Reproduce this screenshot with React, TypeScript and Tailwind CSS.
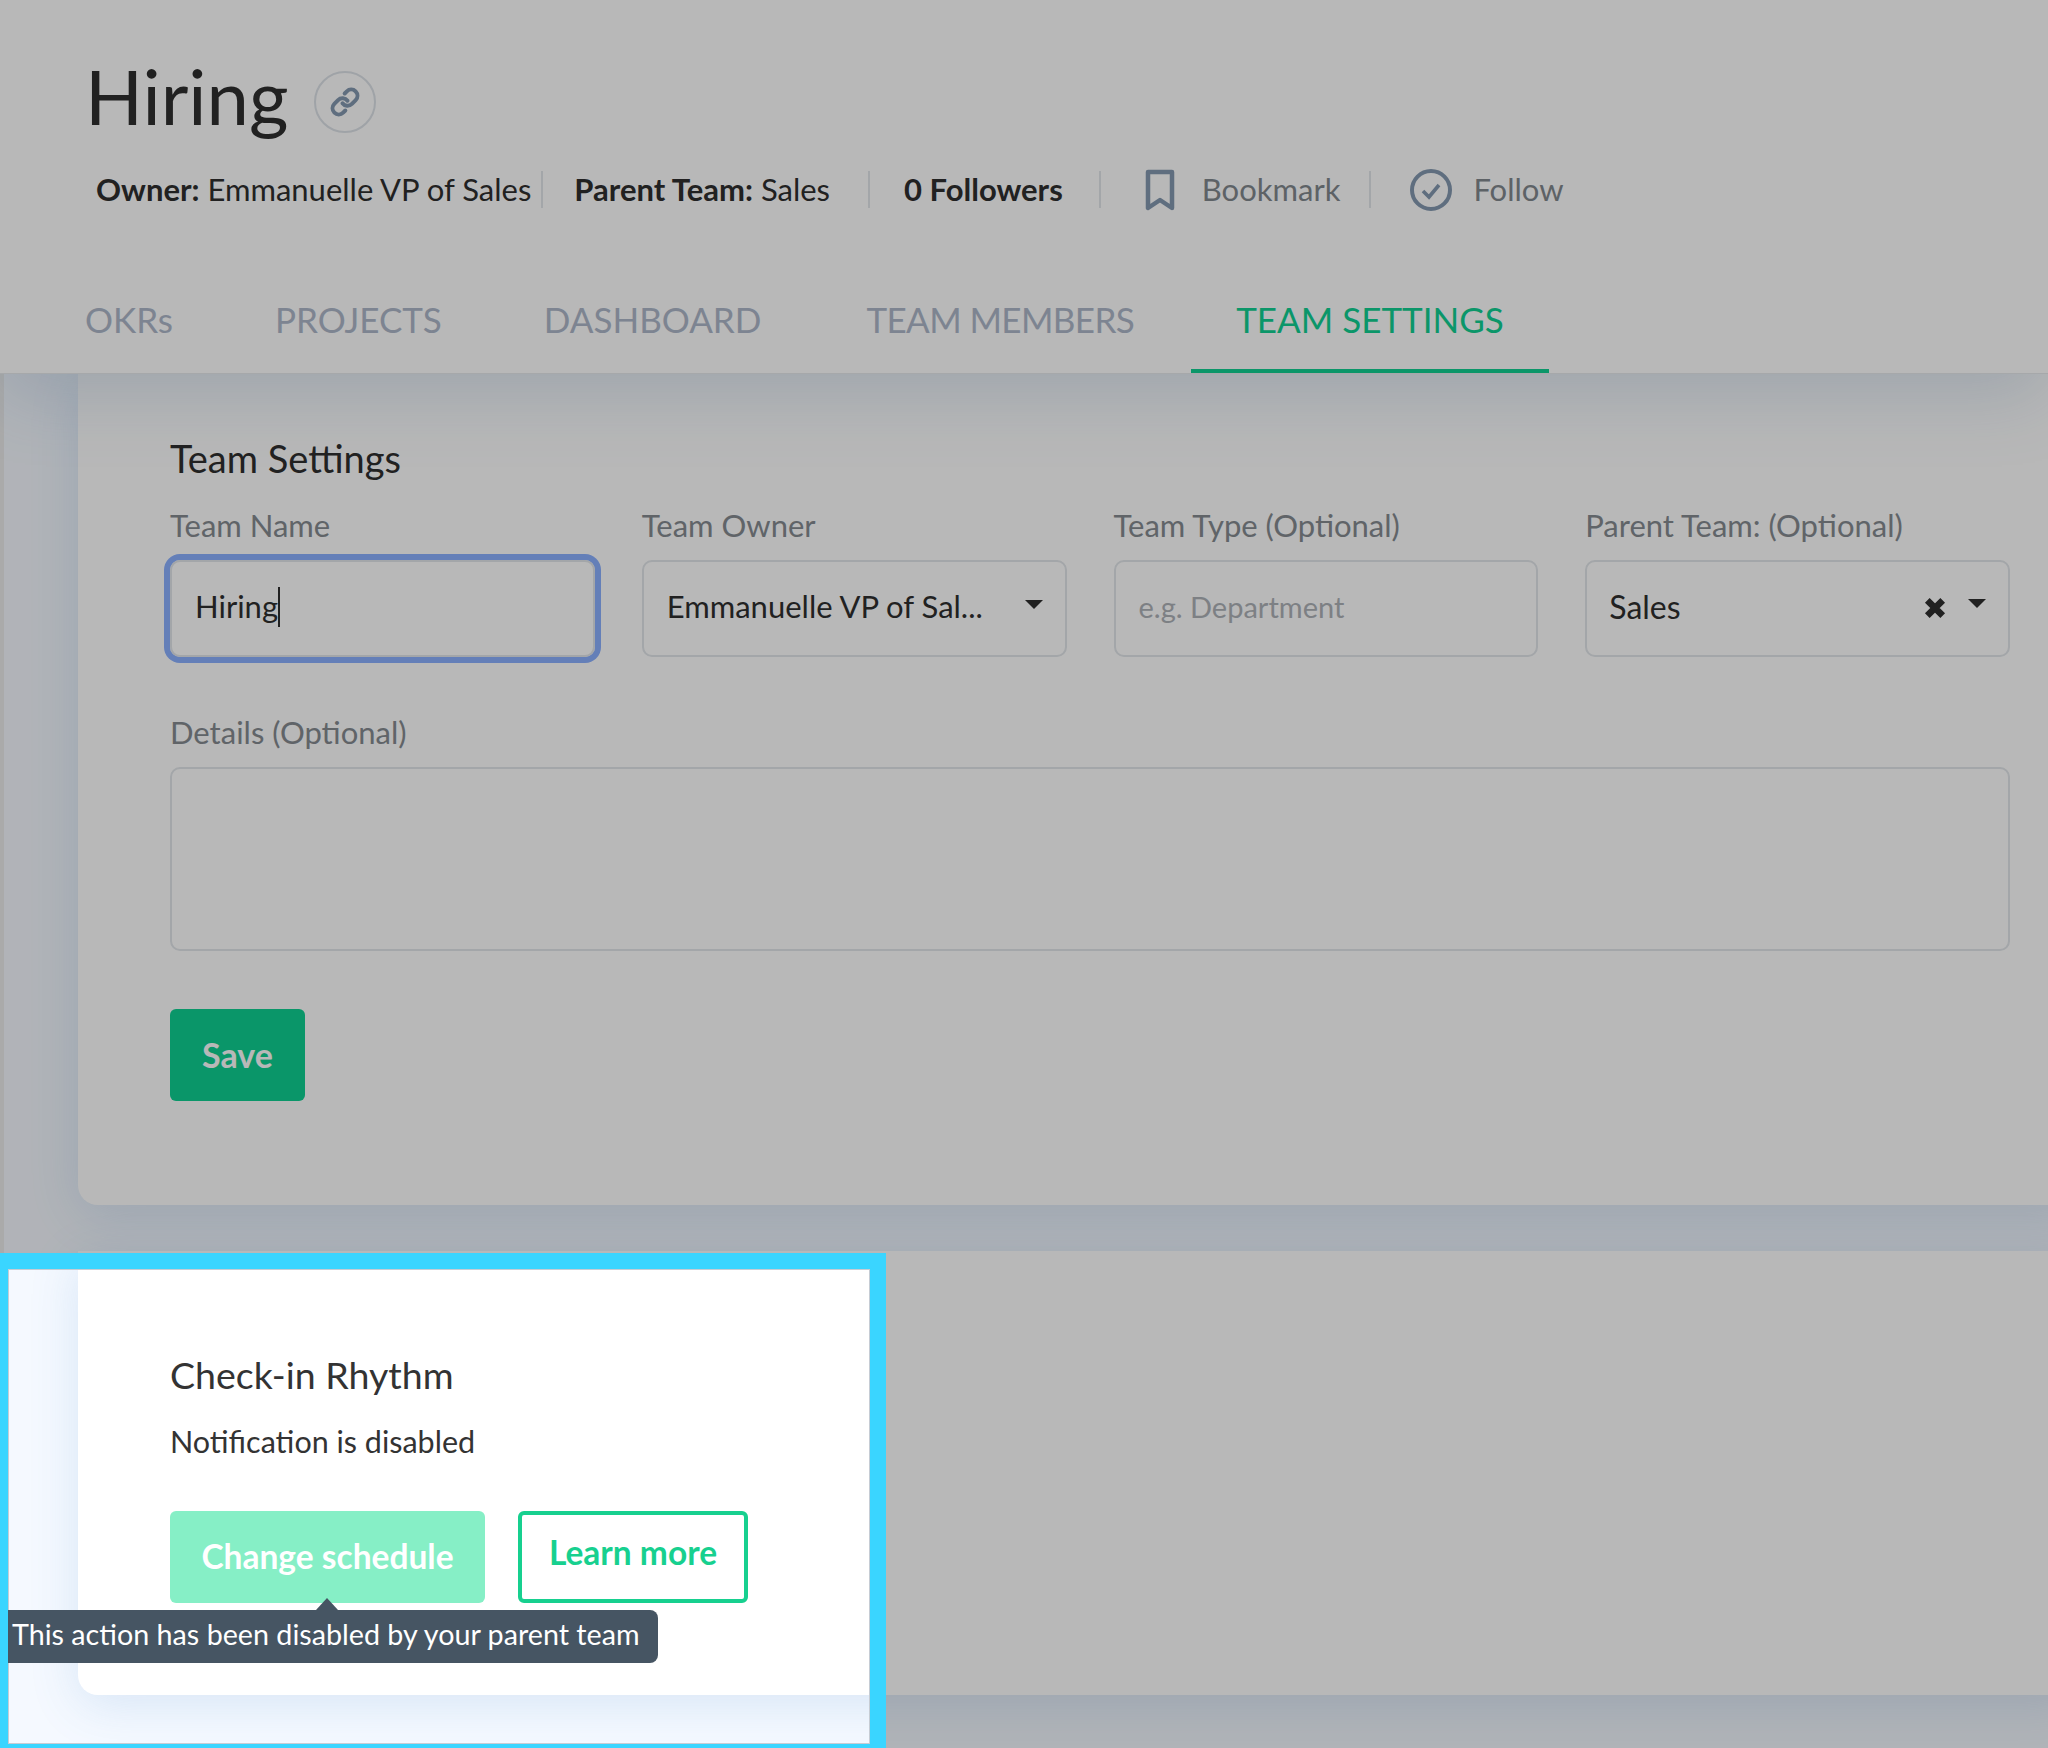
import { Link } from 'lucide-react';

const tabs = ['OKRs', 'PROJECTS', 'DASHBOARD'];

function Caret({ top }: { top: string }) {
  return <span className={`absolute right-[22px] ${top} h-0 w-0 border-x-[9px] border-t-[9px] border-x-transparent border-t-[#2f2f2f]`} />;
}

function Field({ label, children }: { label: string; children: React.ReactNode }) {
  return (
    <div>
      <div className="mb-[18px] text-[31px] leading-[34px] text-[#858b91]">{label}</div>
      {children}
    </div>
  );
}

function Divider({ className }: { className: string }) {
  return <span className={`block h-[37px] w-[2px] shrink-0 bg-[#e2e6ea] ${className}`} />;
}

export default function App() {
  return (
    <div className="relative h-[1748px] w-[2048px] overflow-hidden bg-[#f5f9ff] font-['Lato',sans-serif]">
      <div className="absolute bottom-0 left-0 top-0 w-[4px] bg-[#ececec]" />

      <header className="relative z-10 h-[374px] border-b border-[#e6e9ec] bg-white pl-[85px] shadow-[0_20px_70px_rgba(70,120,170,0.2)]">
        <div className="flex items-center pt-[58px]">
          <h1 className="text-[76px] leading-[76px] text-[#2f2f2f]">Hiring</h1>
          <span className="ml-[25px] mt-[12px] flex h-[62px] w-[62px] items-center justify-center rounded-full border-2 border-[#dde2e8]">
            <Link size={30} strokeWidth={3.2} className="text-[#8499b0]" />
          </span>
        </div>
        <div className="mt-[33px] flex h-[45px] items-center pl-[11px] text-[31px] text-[#2f2f2f]">
          <span><b>Owner:</b> Emmanuelle VP of Sales</span>
          <Divider className="ml-[10px]" />
          <span className="ml-[31px]"><b>Parent Team:</b> Sales</span>
          <Divider className="ml-[38px]" />
          <b className="ml-[34px]">0 Followers</b>
          <Divider className="ml-[36px]" />
          <svg viewBox="0 0 30 42" className="ml-[44px] h-[42px] w-[30px] shrink-0 text-[#8499b0]" fill="none" stroke="currentColor" strokeWidth="4.5" strokeLinejoin="round">
            <path d="M3 3h24v36l-12-8-12 8z" />
          </svg>
          <span className="ml-[27px] text-[#82888e]">Bookmark</span>
          <Divider className="ml-[29px]" />
          <svg viewBox="0 0 42 42" className="ml-[39px] h-[42px] w-[42px] shrink-0 text-[#8499b0]" fill="none" stroke="currentColor">
            <circle cx="21" cy="21" r="19" strokeWidth="4" />
            <path d="M13 22l6 6 10-12" strokeWidth="3.6" />
          </svg>
          <span className="ml-[21px] text-[#82888e]">Follow</span>
        </div>
        <nav className="mt-[74px] flex h-[87px] items-start text-[35px] leading-[40px]">
          {tabs.map((t) => (
            <span key={t} className="mr-[102px] pt-[13px] text-[#aeb8ca]">{t}</span>
          ))}
          <span className="ml-[3px] mr-[102px] pt-[13px] tracking-[-0.6px] text-[#aeb8ca]">TEAM MEMBERS</span>
          <span className="-ml-[45px] h-[87px] border-b-4 border-[#10d092] px-[45px] pt-[13px] text-[#10d092]">TEAM SETTINGS</span>
        </nav>
      </header>

      <main className="pl-[78px]">
        <section className="w-[2000px] rounded-bl-[20px] bg-white pb-[104px] pl-[92px] pt-[64px] shadow-[0_10px_50px_rgba(60,130,200,0.16)]">
          <h2 className="text-[38px] leading-[40px] text-[#2f2f2f]">Team Settings</h2>
          <div className="mt-[30px] grid w-[1840px] grid-cols-4 gap-x-[47px]">
            <Field label="Team Name">
              <div className="flex h-[97px] items-center rounded-[10px] border-2 border-[#e2e6ea] pb-[4px] pl-[23px] text-[31px] text-[#2f2f2f] shadow-[0_0_0_6px_#8bb0ff]">
                Hiring<span className="h-[40px] w-[2px] bg-[#2f2f2f]" />
              </div>
            </Field>
            <Field label="Team Owner">
              <div className="relative flex h-[97px] items-center rounded-[10px] border-2 border-[#e2e6ea] pb-[4px] pl-[23px] text-[31px] text-[#2f2f2f]">
                Emmanuelle VP of Sal...
                <Caret top="top-[38px]" />
              </div>
            </Field>
            <Field label="Team Type (Optional)">
              <div className="flex h-[97px] items-center rounded-[10px] border-2 border-[#e2e6ea] pb-[4px] pl-[23px] text-[29px] text-[#aeb2b8]">
                e.g. Department
              </div>
            </Field>
            <Field label="Parent Team: (Optional)">
              <div className="relative flex h-[97px] items-center rounded-[10px] border-2 border-[#e2e6ea] pb-[4px] pl-[22px] text-[32px] text-[#2f2f2f]">
                Sales
                <svg viewBox="0 0 20 20" className="absolute right-[62px] top-[35px] h-[22px] w-[22px]" fill="none" stroke="#2f2f2f" strokeWidth="6">
                  <path d="M3 3l14 14M17 3L3 17" />
                </svg>
                <Caret top="top-[37px]" />
              </div>
            </Field>
          </div>
          <div className="mt-[58px] text-[31px] leading-[34px] text-[#858b91]">Details (Optional)</div>
          <div className="mt-[18px] h-[184px] w-[1840px] rounded-[10px] border-2 border-[#e2e6ea]" />
          <button className="mt-[58px] h-[92px] w-[135px] rounded-[6px] bg-[#0fd092] pb-[2px] text-[34px] font-bold text-white">Save</button>
        </section>

        <section className="mt-[46px] h-[444px] w-[2000px] rounded-bl-[20px] bg-white pl-[92px] pt-[104px] shadow-[0_10px_50px_rgba(60,130,200,0.16)]">
          <h2 className="text-[37.5px] leading-[40px] text-[#333]">Check-in Rhythm</h2>
          <p className="mt-[26px] text-[30.5px] leading-[40px] text-[#333]">Notification is disabled</p>
          <div className="mt-[50px] flex gap-[33px]">
            <button className="h-[92px] w-[315px] rounded-[6px] bg-[#86efc6] pb-[2px] text-[33.5px] font-bold text-white">Change schedule</button>
            <button className="h-[92px] w-[230px] rounded-[6px] border-4 border-[#17d08f] pb-[10px] text-[33.5px] font-bold text-[#17d08f]">Learn more</button>
          </div>
        </section>
      </main>

      <div className="absolute left-0 top-[1253px] z-20 h-[500px] w-[886px] border-b-[9px] border-l-[8px] border-r-[16px] border-t-[16px] border-[#3ad5ff] shadow-[0_0_0_3000px_rgba(0,0,0,0.28),inset_0_0_0_1px_#c6ccd4]" />

      <div className="absolute left-[8px] top-[1610px] z-30 flex h-[53px] w-[650px] items-center rounded-r-[8px] bg-[#465563] pb-[4px] pl-[4px] text-[28.7px] text-white">
        This action has been disabled by your parent team
        <span className="absolute left-[308px] top-[-12px] h-0 w-0 border-x-[11px] border-b-[12px] border-x-transparent border-b-[#465563]" />
      </div>
    </div>
  );
}
